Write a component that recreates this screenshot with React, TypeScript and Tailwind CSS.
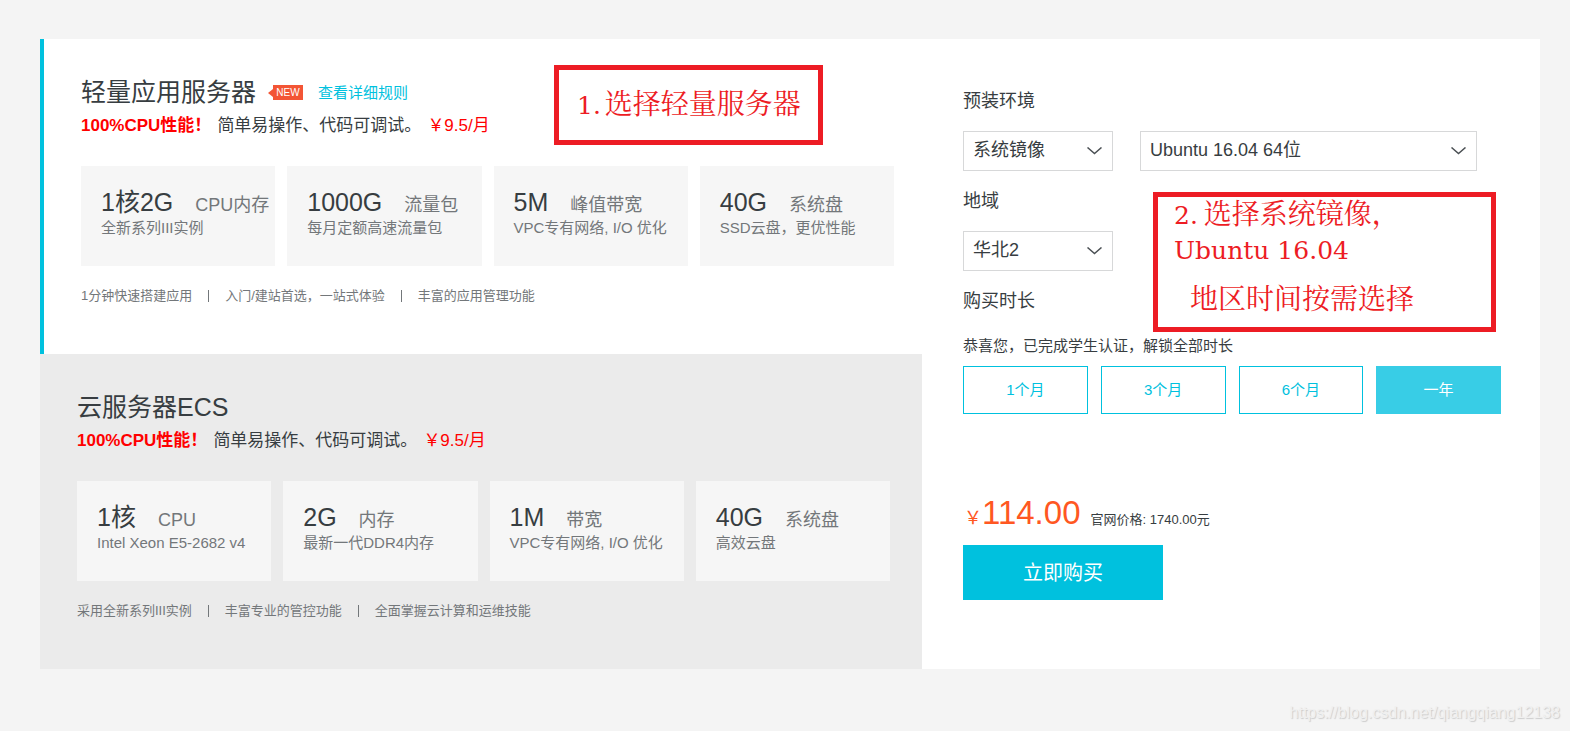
import { useState } from "react";

type Spec = { value: string; label: string; detail: string };

type Plan = { specs: Spec[]; features: string[] };

const lightServer: Plan = {
  specs: [
    { value: "1核2G", label: "CPU内存", detail: "全新系列III实例" },
    { value: "1000G", label: "流量包", detail: "每月定额高速流量包" },
    { value: "5M", label: "峰值带宽", detail: "VPC专有网络, I/O 优化" },
    { value: "40G", label: "系统盘", detail: "SSD云盘，更优性能" },
  ],
  features: ["1分钟快速搭建应用", "入门/建站首选，一站式体验", "丰富的应用管理功能"],
};

const ecsServer: Plan = {
  specs: [
    { value: "1核", label: "CPU", detail: "Intel Xeon E5-2682 v4" },
    { value: "2G", label: "内存", detail: "最新一代DDR4内存" },
    { value: "1M", label: "带宽", detail: "VPC专有网络, I/O 优化" },
    { value: "40G", label: "系统盘", detail: "高效云盘" },
  ],
  features: ["采用全新系列III实例", "丰富专业的管控功能", "全面掌握云计算和运维技能"],
};

const durations = ["1个月", "3个月", "6个月", "一年"];

function Slogan() {
  return (
    <p className="flex items-center gap-1.5 text-[17px] leading-8 whitespace-nowrap">
      <strong className="font-bold text-[#ff0000]">100%CPU性能！</strong>
      <span>简单易操作、代码可调试。</span>
      <span className="text-[#ff0000]">￥9.5/月</span>
    </p>
  );
}

function PlanDetails({ plan }: { plan: Plan }) {
  return (
    <>
      <Slogan />
      <ul className="mt-6 grid grid-cols-4 gap-3">
        {plan.specs.map((spec) => (
          <li key={spec.value} className="h-[100px] bg-[#f6f6f6] pt-[23px] pl-5 whitespace-nowrap">
            <div className="flex items-baseline gap-[22px]">
              <span className="text-[25px] leading-[26px]">{spec.value}</span>
              <span className="text-lg leading-[26px] text-[#73777a]">{spec.label}</span>
            </div>
            <p className="text-[15px] leading-5 text-[#73777a]">{spec.detail}</p>
          </li>
        ))}
      </ul>
      <ul className="mt-5 flex items-center gap-4 text-[13px] leading-5 whitespace-nowrap text-[#73777a]">
        {plan.features.map((feature, i) => (
          <li key={feature} className="flex items-center gap-4">
            {i > 0 && <span className="h-3 w-px bg-[#73777a]" />}
            {feature}
          </li>
        ))}
      </ul>
    </>
  );
}

function NewBadge() {
  return (
    <span className="flex items-center">
      <svg className="h-2 w-[5px] fill-[#f35535]" viewBox="0 0 5 8" aria-hidden="true">
        <path d="M5 0v8L0 4z" />
      </svg>
      <span className="flex h-[15px] w-[30px] items-center justify-center bg-[#f35535] text-[10px] leading-none text-white">
        NEW
      </span>
    </span>
  );
}

function Dropdown({ id, label, options, className }: { id: string; label: string; options: string[]; className: string }) {
  return (
    <div className={`relative ${className}`}>
      <select
        id={id}
        aria-label={label}
        className="h-10 w-full appearance-none rounded-none border border-[#d7d8d9] bg-white pr-9 pb-0.5 pl-[9px] text-lg text-[#373d41] outline-none"
      >
        {options.map((option) => (
          <option key={option}>{option}</option>
        ))}
      </select>
      <svg
        className="pointer-events-none absolute top-4 right-[10px] h-2 w-4 fill-none stroke-[#4b5054] stroke-[1.5]"
        viewBox="0 0 16 8"
        aria-hidden="true"
      >
        <path d="M0.5 0.5l7 6 7-6" />
      </svg>
    </div>
  );
}

export default function App() {
  const [duration, setDuration] = useState("一年");

  return (
    <div className="min-h-screen bg-[#f4f4f4] pt-[39px] pr-[30px] pl-10 font-['Liberation_Sans','Noto_Sans_CJK_SC',sans-serif] text-[#373d41]">
      <main className="flex bg-white">
        <div className="w-[58.8%] shrink-0">
          <section className="relative h-[315px] border-l-4 border-[#00c1de] pt-9 pr-7 pl-[37px]">
            <div className="flex h-[35px] items-center">
              <h2 className="text-[25px] leading-[35px]">轻量应用服务器</h2>
              <div className="ml-3 flex items-center gap-[15px]">
                <NewBadge />
                <a href="#rules" className="text-[15px] leading-5 text-[#00c1de]">
                  查看详细规则
                </a>
              </div>
            </div>
            <PlanDetails plan={lightServer} />
            <aside className="absolute top-[26px] left-[510px] flex h-20 w-[269px] items-center border-[5px] border-[#ed1c24] pl-[18px] font-['DejaVu_Serif','Noto_Serif_CJK_SC','Noto_Sans_CJK_SC',serif] whitespace-nowrap text-[#ed1c24]">
              <p className="flex items-baseline gap-1 text-[28px] leading-[35px]">
                <span className="text-[25px]">1.</span>选择轻量服务器
              </p>
            </aside>
          </section>
          <section className="h-[315px] bg-[#ebebeb] pt-9 pr-8 pl-[37px]">
            <h2 className="text-[25px] leading-[35px]">云服务器ECS</h2>
            <PlanDetails plan={ecsServer} />
          </section>
        </div>

        <section className="relative min-w-0 grow pt-[42px] pr-[39px] pl-[41px]">
          <label htmlFor="image-type" className="block text-lg leading-10">
            预装环境
          </label>
          <div className="mt-[10px] flex gap-[27px] pr-6">
            <Dropdown id="image-type" label="预装环境" options={["系统镜像", "应用镜像"]} className="w-[150px] shrink-0" />
            <Dropdown id="image" label="镜像版本" options={["Ubuntu 16.04 64位", "CentOS 7.3 64位"]} className="grow" />
          </div>
          <label htmlFor="region" className="mt-[10px] block text-lg leading-10">
            地域
          </label>
          <Dropdown id="region" label="地域" options={["华北2", "华东1"]} className="mt-[10px] w-[150px]" />
          <h3 className="mt-[10px] text-lg leading-10">购买时长</h3>
          <p className="mt-[15px] text-[15px] leading-5">恭喜您，已完成学生认证，解锁全部时长</p>
          <div className="mt-[10px] grid grid-cols-4 gap-[13px]">
            {durations.map((item) => (
              <button
                key={item}
                type="button"
                aria-pressed={item === duration}
                onClick={() => setDuration(item)}
                className={
                  item === duration
                    ? "h-12 border border-[#38cde6] bg-[#38cde6] text-[15px] text-white"
                    : "h-12 border border-[#00c1de] bg-white text-[15px] text-[#00c1de]"
                }
              >
                {item}
              </button>
            ))}
          </div>
          <p className="mt-[79px] flex items-baseline pl-px leading-10 whitespace-nowrap">
            <span className="text-lg leading-10 text-[#ff5722]">￥</span>
            <span className="text-[33px] leading-10 text-[#ff5722]">114.00</span>
            <span className="ml-[10px] text-[13px]">官网价格: 1740.00元</span>
          </p>
          <button type="button" className="mt-[5px] block h-[55px] w-[200px] bg-[#00c1de] text-xl text-white">
            立即购买
          </button>
          <aside className="absolute top-[153px] left-[231px] h-[140px] w-[343px] border-[5px] border-[#ed1c24] pl-4 font-['DejaVu_Serif','Noto_Serif_CJK_SC','Noto_Sans_CJK_SC',serif] text-[28px] leading-[35px] whitespace-nowrap text-[#ed1c24]">
            <p className="flex items-baseline gap-[6px]">
              <span className="text-[25px]">2.</span>选择系统镜像，
            </p>
            <p className="text-[25px] leading-[35px]">Ubuntu 16.04</p>
            <p className="mt-[14px] pl-4">地区时间按需选择</p>
          </aside>
        </section>
      </main>
      <footer className="-mr-5 pt-8 text-right leading-6 text-[#f0f0f0] [text-shadow:1px_1px_1px_#cccccc]">
        https://blog.csdn.net/qiangqiang12138
      </footer>
    </div>
  );
}
